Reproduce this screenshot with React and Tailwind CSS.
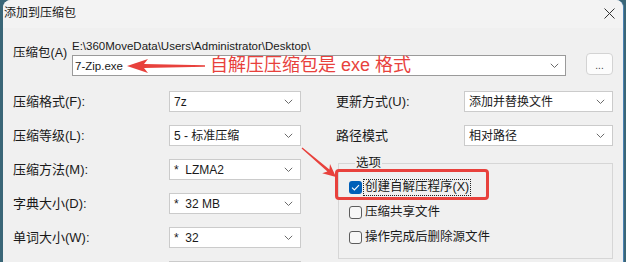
import React from "react";

const FONT = { fontFamily: '"Liberation Sans", "Noto Sans CJK SC", sans-serif' };

const Chevron = () => (
  <svg width="9" height="6" viewBox="0 0 9 6" className="shrink-0">
    <path d="M0.8 0.8 L4.5 4.5 L8.2 0.8" fill="none" stroke="#6b6b6b" strokeWidth="1" />
  </svg>
);

const Select = ({ value, className = "" }) => (
  <div
    className={`h-[21px] bg-white border border-[#cbcbcb] flex items-center pl-[4px] pr-[7px] text-[12px] leading-[14px] text-[#1a1a1a] ${className}`}
  >
    <span className="flex-1 whitespace-nowrap">{value}</span>
    <Chevron />
  </div>
);

const Checkbox = ({ checked }) =>
  checked ? (
    <div className="w-[13px] h-[13px] rounded-[3px] bg-[#005fb8] flex items-center justify-center shrink-0">
      <svg width="9" height="7" viewBox="0 0 9 7">
        <path d="M1 3.6 L3.4 6 L8 1.2" fill="none" stroke="white" strokeWidth="1.1" />
      </svg>
    </div>
  ) : (
    <div className="w-[13px] h-[13px] rounded-[3px] border border-[#5d5d5d] bg-[#f7f7f7] shrink-0"></div>
  );

const App = () => {
  const leftRows = [
    ["压缩格式(F):", "7z"],
    ["压缩等级(L):", "5 - 标准压缩"],
    ["压缩方法(M):", "*\u00a0\u00a0LZMA2"],
    ["字典大小(D):", "*\u00a0\u00a032 MB"],
    ["单词大小(W):", "*\u00a0\u00a032"],
    ["", ""],
  ];

  return (
    <div className="w-[626px] h-[262px] bg-[#3a6677] overflow-hidden flex" style={FONT}>
      {/* DIALOG WINDOW */}
      <div className="ml-[3px] w-[621px] h-[262px] flex flex-col rounded-t-[8px] overflow-hidden bg-[#f0f0f0] border-r border-[#4b82b3]">
        {/* TITLE BAR */}
        <div className="h-[28px] shrink-0 bg-[#f3f3f3] flex items-center justify-between pl-[1px] pr-[8px]">
          <span className="text-[12px] leading-[16px] text-[#1a1a1a] -mt-[2px]">添加到压缩包</span>
          <svg width="11" height="11" viewBox="0 0 11 11" className="-mt-[2px]">
            <path d="M0.5 0.5 L10.5 10.5 M10.5 0.5 L0.5 10.5" stroke="#333" strokeWidth="1" />
          </svg>
        </div>

        {/* BODY */}
        <div className="relative flex-1 pl-[10px] pr-[10px] pt-[10px] text-[#1a1a1a]">
          {/* ARCHIVE PATH */}
          <div className="flex">
            <div className="w-[59px] pt-[7px] text-[12.5px] leading-[16px] whitespace-nowrap">压缩包(A)</div>
            <div className="flex-1">
              <div className="h-[17px] text-[11.5px] leading-[16px] whitespace-nowrap">
                E:\360MoveData\Users\Administrator\Desktop\
              </div>
              <div className="flex items-start">
                <div className="flex-1 h-[21px] bg-white border border-[#9a9a9a] flex items-center pl-[2px] pr-[6px]">
                  <span className="text-[11.5px] leading-[14px] whitespace-nowrap">7-Zip.exe</span>
                  <svg width="78" height="16" viewBox="0 0 78 16" className="ml-[4px] shrink-0">
                    <polygon
                      points="0,8 21,1 17,6 78,7.2 78,8.8 17,10 21,15"
                      fill="#e8413c"
                    />
                  </svg>
                  <span className="ml-[5px] flex-1 text-[18px] leading-[19px] text-[#e8413c] whitespace-nowrap">
                    自解压压缩包是 exe 格式
                  </span>
                  <Chevron />
                </div>
                <button className="ml-[20px] -mt-[2px] w-[27px] h-[22px] rounded-[4px] bg-[#fcfcfc] border border-[#d3d3d3] text-[10px] leading-[10px] text-[#444] flex items-center justify-center pt-[3px]">
                  ...
                </button>
              </div>
            </div>
          </div>

          {/* SETTINGS */}
          <div className="mt-[15px] flex gap-[35px]">
            {/* LEFT COLUMN */}
            <div className="w-[288px] flex flex-col gap-[13px]">
              {leftRows.map(([label, value], i) => (
                <div key={i} className="flex items-center h-[21px]">
                  <span className="w-[156px] text-[13px] leading-[16px] whitespace-nowrap">{label}</span>
                  <Select value={value} className="w-[132px]" />
                </div>
              ))}
            </div>

            {/* RIGHT COLUMN */}
            <div className="flex-1 flex flex-col">
              <div className="flex flex-col gap-[13px]">
                <div className="flex items-center h-[21px]">
                  <span className="w-[128px] text-[13px] leading-[16px] whitespace-nowrap">更新方式(U):</span>
                  <Select value="添加并替换文件" className="flex-1" />
                </div>
                <div className="flex items-center h-[21px]">
                  <span className="w-[128px] text-[13px] leading-[16px] whitespace-nowrap">路径模式</span>
                  <Select value="相对路径" className="flex-1" />
                </div>
              </div>

              {/* OPTIONS GROUP */}
              <fieldset className="mt-[9px] ml-[2px] h-[104px] border border-[#d6d6d6] pl-[10px]">
                <legend className="ml-[6px] px-[1px] text-[12.5px] leading-[16px]">选项</legend>
                <div className="pt-[4px] flex flex-col text-[12.5px] leading-[15px]">
                  <div className="relative h-[25px] flex items-center">
                    <Checkbox checked />
                    <span className="ml-[1px] px-[1px] border border-dotted border-[#222] whitespace-nowrap">
                      创建自解压程序(X)
                    </span>
                    <div className="absolute left-[-14px] top-[-6px] w-[154px] h-[31px] rounded-[4px] border-[3px] border-[#e8413c]"></div>
                  </div>
                  <div className="h-[25px] flex items-center gap-[3px]">
                    <Checkbox />
                    <span className="whitespace-nowrap">压缩共享文件</span>
                  </div>
                  <div className="h-[25px] flex items-center gap-[3px]">
                    <Checkbox />
                    <span className="whitespace-nowrap">操作完成后删除源文件</span>
                  </div>
                </div>
              </fieldset>
            </div>
          </div>

          {/* ANNOTATION ARROW */}
          <svg width="44" height="40" viewBox="0 0 44 40" className="absolute left-[296px] top-[116px]">
            <polygon
              points="37,33 23.2,29.2 28.4,27.6 2.6,4.5 3.4,3.5 30.4,25.4 31,20"
              fill="#e8413c"
            />
          </svg>
        </div>
      </div>
    </div>
  );
};

export default App;
